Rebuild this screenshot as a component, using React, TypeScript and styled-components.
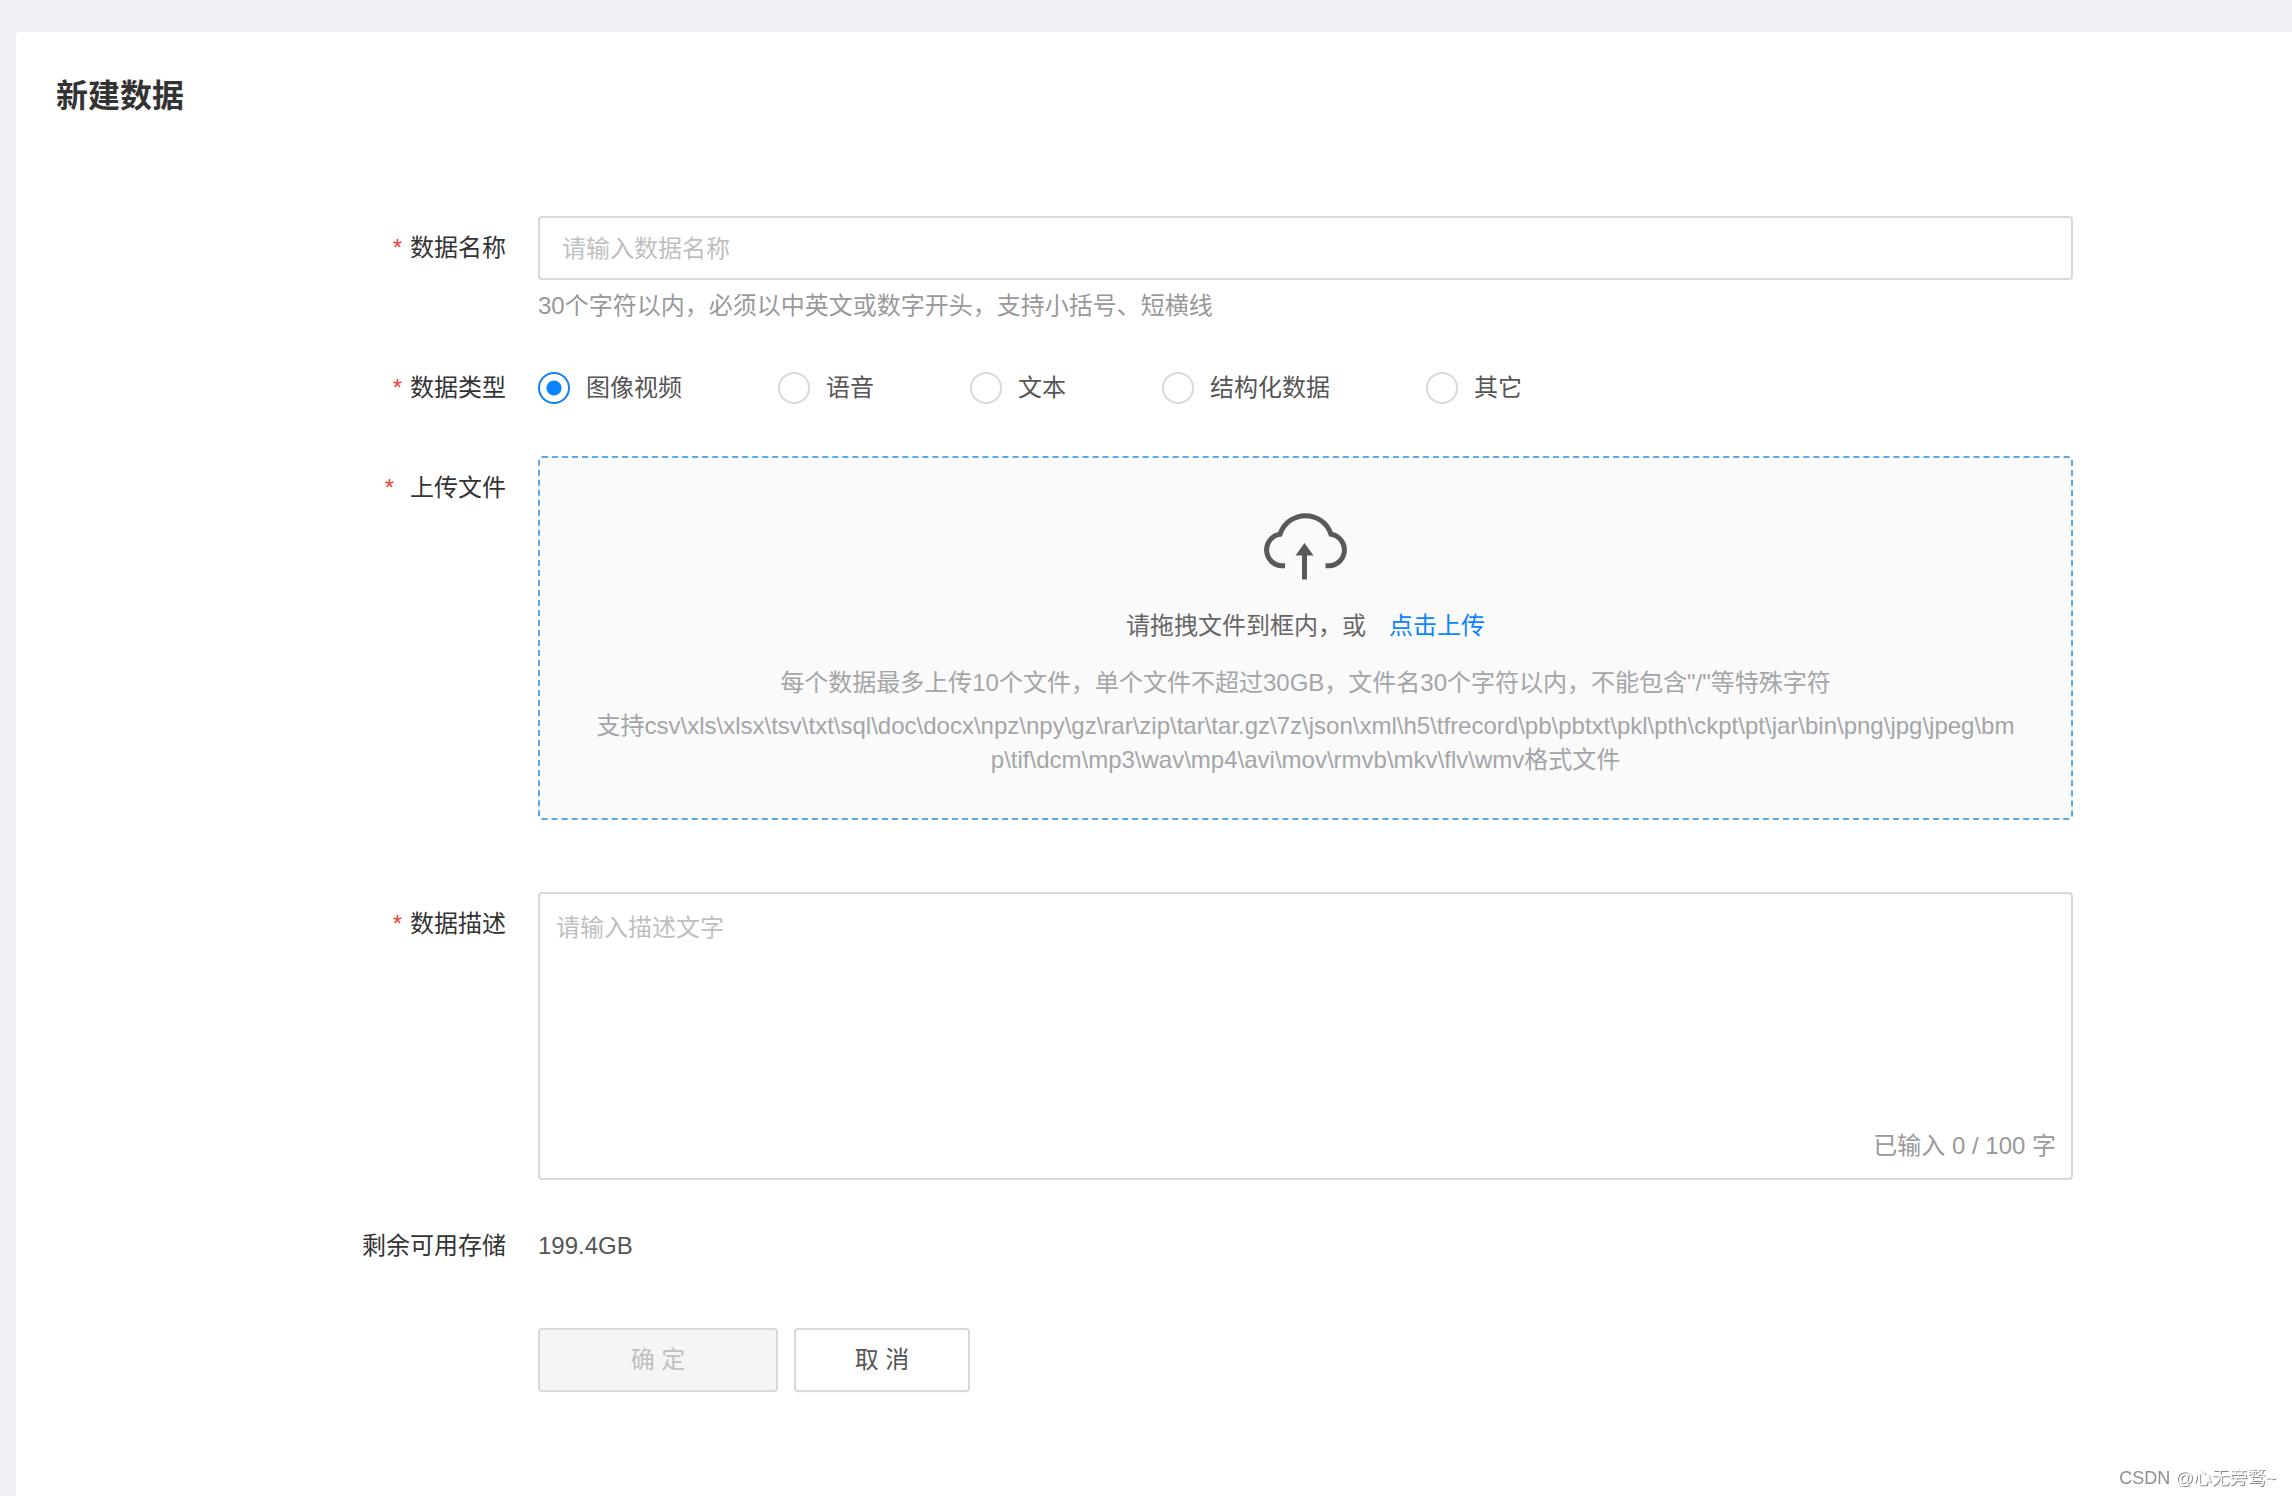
import React, { useState } from "react";
import styled, { createGlobalStyle } from "styled-components";

const GlobalStyle = createGlobalStyle`
  * { box-sizing: border-box; }
  body {
    margin: 0;
    background: #eff0f4;
    color: #333;
    font-family: "Liberation Sans", "Noto Sans CJK SC", sans-serif;
    font-size: 24px;
    line-height: 36px;
  }
  input, textarea, button { font: inherit; }
`;

const Page = styled.div`
  padding: 32px 0 0 16px;
`;

const Panel = styled.main`
  min-height: calc(100vh - 32px);
  padding: 40px 0 104px;
  background: #fff;
  border-top-left-radius: 4px;
`;

const Title = styled.h1`
  margin: 0;
  padding: 0 40px;
  font-size: 32px;
  line-height: 48px;
  font-weight: 600;
`;

const Form = styled.form`
  padding: 96px 219px 0 0;
`;

const Row = styled.div<{ $after: number }>`
  display: grid;
  grid-template-columns: 490px minmax(0, 1fr);
  column-gap: 32px;
  margin-bottom: ${(p) => p.$after}px;
`;

const labelText = `
  text-align: right;
  line-height: 64px;
  color: #333;
`;

const Label = styled.label`
  ${labelText}
`;

const Caption = styled.span`
  ${labelText}
`;

const Star = styled.span<{ $gap?: number }>`
  margin-right: ${(p) => p.$gap ?? 8}px;
  line-height: 24px;
  color: #f04134;
`;

const TextInput = styled.input`
  display: block;
  width: 100%;
  height: 64px;
  padding: 2px 22px 0;
  border: 2px solid #d9d9d9;
  border-radius: 4px;
  background: #fff;
  color: #555;
  outline: none;
  &::placeholder { color: #bfbfbf; opacity: 1; }
`;

const Hint = styled.p`
  margin: 8px 0 0;
  color: #999;
`;

const Radios = styled.div`
  display: flex;
  flex-wrap: wrap;
  column-gap: 96px;
`;

const RadioLabel = styled.label`
  display: flex;
  align-items: center;
  gap: 16px;
  height: 64px;
  color: #555;
`;

const Radio = styled.input`
  appearance: none;
  width: 32px;
  height: 32px;
  margin: 0;
  border: 2px solid #d9d9d9;
  border-radius: 50%;
  background: #fff;
  &:checked {
    border-color: #0f80f5;
    background: radial-gradient(circle, #0a84ff 7px, #fff 8px);
  }
`;

const DropZone = styled.div`
  display: flex;
  flex-direction: column;
  align-items: center;
  padding: 54px 54px 41px;
  border: 2px dashed #5aa9e6;
  border-radius: 4px;
  background: #fafafa;
  text-align: center;
  color: #a3a5a8;
`;

const CloudIcon = styled.svg`
  display: block;
  width: 88px;
  height: 68px;
`;

const DropText = styled.p`
  display: flex;
  gap: 23px;
  margin: 28px 0 21px;
  color: #666;
`;

const UploadButton = styled.button`
  padding: 0;
  border: 0;
  background: none;
  color: #0a84ff;
  line-height: 36px;
  cursor: pointer;
`;

const Limits = styled.p`
  margin: 0 0 8px;
`;

const Formats = styled.p`
  margin: 0;
  line-height: 34px;
  word-break: break-all;
`;

const AreaBox = styled.div`
  display: flex;
  flex-direction: column;
  height: 288px;
  padding: 16px 15px 14px 16px;
  border: 2px solid #d9d9d9;
  border-radius: 4px;
`;

const Area = styled.textarea`
  flex: 1;
  width: 100%;
  padding: 0;
  border: 0;
  background: none;
  color: #555;
  resize: none;
  outline: none;
  &::placeholder { color: #bfbfbf; opacity: 1; }
`;

const Counter = styled.span`
  align-self: flex-end;
  color: #999;
`;

const Value = styled.output`
  line-height: 64px;
  color: #555;
`;

const Actions = styled.div`
  display: flex;
  gap: 16px;
  grid-column: 2;
`;

const Button = styled.button<{ $wide?: boolean }>`
  width: ${(p) => (p.$wide ? 240 : 176)}px;
  height: 64px;
  padding: 0;
  border: 2px solid #d9d9d9;
  border-radius: 4px;
  background: #fff;
  color: #555;
  box-shadow: 0 4px 4px rgba(0, 0, 0, 0.02);
  &:disabled {
    background: #f5f5f5;
    color: #bfbfbf;
    box-shadow: none;
  }
`;

const Watermark = styled.div`
  position: fixed;
  right: 16px;
  bottom: 6px;
  font-size: 18px;
  line-height: 24px;
  color: #fff;
  text-shadow: 1px 1px 0 #888;
`;

const Site = styled.span`
  color: #8f8f8f;
  text-shadow: none;
`;

const types = ["图像视频", "语音", "文本", "结构化数据", "其它"];

export default function App() {
  const [type, setType] = useState(types[0]);
  const [desc, setDesc] = useState("");

  return (
    <>
      <GlobalStyle />
      <Page>
        <Panel>
          <Title>新建数据</Title>
          <Form onSubmit={(e) => e.preventDefault()}>
            <Row $after={32}>
              <Label htmlFor="name"><Star>*</Star>数据名称</Label>
              <div>
                <TextInput id="name" type="text" placeholder="请输入数据名称" />
                <Hint>30个字符以内，必须以中英文或数字开头，支持小括号、短横线</Hint>
              </div>
            </Row>
            <Row $after={36}>
              <Caption id="type"><Star>*</Star>数据类型</Caption>
              <Radios role="radiogroup" aria-labelledby="type">
                {types.map((t) => (
                  <RadioLabel key={t}>
                    <Radio type="radio" name="type" checked={type === t} onChange={() => setType(t)} />
                    {t}
                  </RadioLabel>
                ))}
              </Radios>
            </Row>
            <Row $after={72}>
              <Caption id="file"><Star $gap={16}>*</Star>上传文件</Caption>
              <DropZone role="group" aria-labelledby="file">
                <CloudIcon viewBox="0 0 88 68" fill="none" aria-hidden="true">
                  <path
                    d="M23 53.8H20A15.9 15.9 0 0 1 18 22.2A26.8 26.8 0 0 1 69 22.2A15.9 15.9 0 0 1 67 53.8H63.5"
                    stroke="#595959"
                    strokeWidth="5"
                  />
                  <path d="M42.5 31L51.500 43.500H45V67.500H40V43.500H33.500Z" fill="#595959" />
                </CloudIcon>
                <DropText>
                  请拖拽文件到框内，或
                  <UploadButton type="button">点击上传</UploadButton>
                </DropText>
                <Limits>每个数据最多上传10个文件，单个文件不超过30GB，文件名30个字符以内，不能包含"/"等特殊字符</Limits>
                <Formats>
                  {"支持csv\\xls\\xlsx\\tsv\\txt\\sql\\doc\\docx\\npz\\npy\\gz\\rar\\zip\\tar\\tar.gz\\7z\\json\\xml\\h5\\tfrecord\\pb\\pbtxt\\pkl\\pth\\ckpt\\pt\\jar\\bin\\png\\jpg\\jpeg\\bmp\\tif\\dcm\\mp3\\wav\\mp4\\avi\\mov\\rmvb\\mkv\\flv\\wmv格式文件"}
                </Formats>
              </DropZone>
            </Row>
            <Row $after={34}>
              <Label htmlFor="desc"><Star>*</Star>数据描述</Label>
              <AreaBox>
                <Area
                  id="desc"
                  maxLength={100}
                  placeholder="请输入描述文字"
                  value={desc}
                  onChange={(e) => setDesc(e.target.value)}
                />
                <Counter>已输入 {desc.length} / 100 字</Counter>
              </AreaBox>
            </Row>
            <Row $after={50}>
              <Label htmlFor="left">剩余可用存储</Label>
              <Value id="left">199.4GB</Value>
            </Row>
            <Row $after={0}>
              <Actions>
                <Button type="submit" $wide disabled>确 定</Button>
                <Button type="button">取 消</Button>
              </Actions>
            </Row>
          </Form>
        </Panel>
      </Page>
      <Watermark><Site>CSDN</Site> @心无旁骛~</Watermark>
    </>
  );
}
